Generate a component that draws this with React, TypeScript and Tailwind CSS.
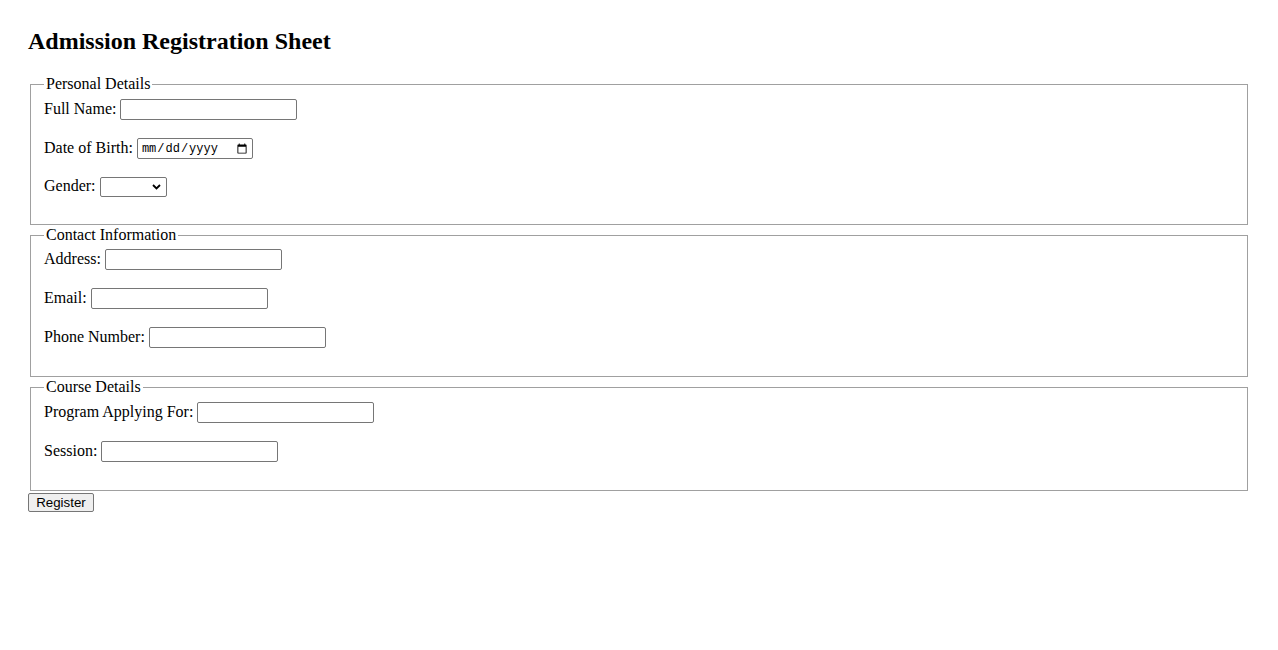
const serif = "font-['Liberation_Serif','Times_New_Roman',serif]";

const inputBox =
  'block h-[21px] w-[177px] rounded-[2px] border border-[#767676] bg-white px-[2px] text-[13.33px] font-[Liberation_Sans,Arial,sans-serif] outline-none';

function Row({ label, children, tall = true }: { label: string; children: React.ReactNode; tall?: boolean }) {
  return (
    <div className={`flex items-center gap-[4px] ${tall ? 'h-[21px]' : 'h-[19px]'}`}>
      <label className="pb-[2px] text-[16px] leading-[18px]">{label}</label>
      {children}
    </div>
  );
}

function Section({ title, pt, children }: { title: string; pt: string; children: React.ReactNode }) {
  return (
    <fieldset className={`mx-[2px] mb-[1px] border border-[#a0a0a0] px-[13px] pb-[28px] ${pt}`}>
      <legend className="h-[19px] px-[2px] text-[16px] leading-[17px]">{title}</legend>
      <div className="flex flex-col gap-[18px]">{children}</div>
    </fieldset>
  );
}

export default function App() {
  return (
    <div className={`min-h-[650px] bg-white px-[28px] pt-[28px] text-black ${serif}`}>
      <h2 className="mb-[21px] text-[24px] font-bold leading-[26px]">Admission Registration Sheet</h2>

      <form>
        <Section title="Personal Details" pt="pt-[5px]">
          <Row label="Full Name:">
            <input type="text" className={inputBox} />
          </Row>
          <Row label="Date of Birth:">
            <input
              type="date"
              className="block h-[21px] w-[116px] rounded-[2px] border border-[#767676] bg-white pl-[3px] pr-[2px] text-[12px] font-['Liberation_Mono','Courier_New',monospace] outline-none"
            />
          </Row>
          <Row label="Gender:" tall={false}>
            <div className="relative h-[20px] w-[67px] self-start">
              <select className="block h-[20px] w-[67px] appearance-none rounded-[2px] border border-[#767676] bg-white text-[13.33px] outline-none">
                <option value=""></option>
                <option>Male</option>
                <option>Female</option>
              </select>
              <svg
                className="pointer-events-none absolute right-[6px] top-[7px]"
                width="9"
                height="6"
                viewBox="0 0 9 6"
                fill="none"
              >
                <path d="M1 1L4.5 4.5L8 1" stroke="#000" strokeWidth="1.8" />
              </svg>
            </div>
          </Row>
        </Section>

        <Section title="Contact Information" pt="pt-[4px]">
          <Row label="Address:">
            <input type="text" className={inputBox} />
          </Row>
          <Row label="Email:">
            <input type="email" className={inputBox} />
          </Row>
          <Row label="Phone Number:">
            <input type="tel" className={inputBox} />
          </Row>
        </Section>

        <Section title="Course Details" pt="pt-[5px]">
          <Row label="Program Applying For:">
            <input type="text" className={inputBox} />
          </Row>
          <Row label="Session:">
            <input type="text" className={inputBox} />
          </Row>
        </Section>

        <button
          type="submit"
          className="mt-[2px] block h-[19px] w-[66px] rounded-[2px] border border-[#767676] bg-[#efefef] text-[13.33px] leading-[16px] font-['Liberation_Sans',Arial,sans-serif]"
        >
          Register
        </button>
      </form>
    </div>
  );
}
